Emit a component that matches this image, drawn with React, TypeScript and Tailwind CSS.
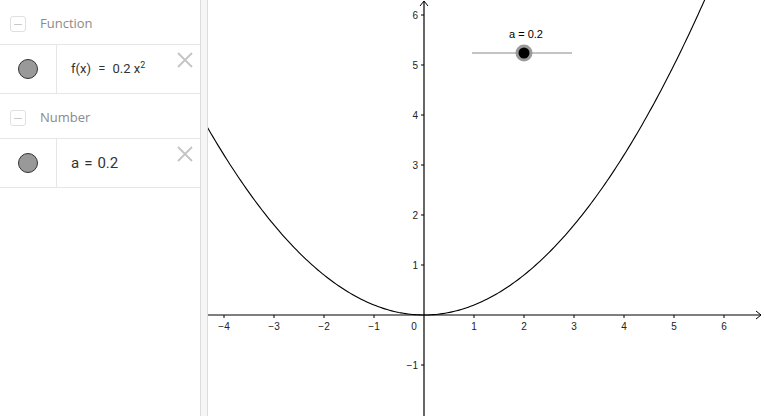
import React from "react";

const ORIGIN_X = 216;
const ORIGIN_Y = 315;
const UNIT = 50;

const parabola = (() => {
  const pts: string[] = [];
  for (let i = 0; i <= 220; i++) {
    const x = -4.4 + (i * 10.2) / 220;
    const y = 0.2 * x * x;
    pts.push(`${(ORIGIN_X + x * UNIT).toFixed(2)},${(ORIGIN_Y - y * UNIT).toFixed(2)}`);
  }
  return "M" + pts.join(" L");
})();

const CollapseIcon = () => (
  <div className="w-[16px] h-[16px] rounded-[3px] border border-[#e0e0e0] flex items-center justify-center">
    <div className="w-[8px] h-[1px] bg-[#c8c8c8]" />
  </div>
);

const CloseIcon = () => (
  <svg width="18" height="18" viewBox="0 0 18 18" className="absolute right-[6px] top-[6px]">
    <path d="M2 2 L16 16 M16 2 L2 16" stroke="#c4c4c4" strokeWidth="1.8" />
  </svg>
);

const Header = ({ label }: { label: string }) => (
  <div className="h-[45px] flex items-center pl-[10px] pt-[4px] gap-[14px] border-b border-[#e6e6e6]">
    <CollapseIcon />
    <span className="text-[13px] text-[#8a8a8a]" style={{ fontFamily: "'Open Sans', sans-serif" }}>
      {label}
    </span>
  </div>
);

const Item = ({ children }: { children: React.ReactNode }) => (
  <div className="relative h-[49px] flex border-b border-[#e6e6e6]">
    <div className="w-[57px] flex items-center justify-center border-r border-[#e6e6e6]">
      <div className="w-[20px] h-[20px] rounded-full bg-[#999999] border border-[#333333]" />
    </div>
    <div className="flex items-center pl-[14px] text-[#333333]" style={{ fontFamily: "'Roboto', 'Liberation Sans', sans-serif" }}>
      {children}
    </div>
    <CloseIcon />
  </div>
);

const Graph = () => {
  const xs = [-4, -3, -2, -1, 1, 2, 3, 4, 5, 6];
  const ys = [-1, 1, 2, 3, 4, 5, 6];
  const fmt = (n: number) => (n < 0 ? "\u2212" + Math.abs(n) : String(n));
  return (
    <svg width="556" height="416" className="block" style={{ fontFamily: "'Liberation Sans', Arial, sans-serif" }}>
      {/* axes */}
      <line x1="0" y1={ORIGIN_Y} x2="553" y2={ORIGIN_Y} stroke="#000" strokeWidth="1.2" />
      <path d="M548 311 L553 315 L548 319" fill="none" stroke="#000" strokeWidth="1" />
      <line x1={ORIGIN_X} y1="1" x2={ORIGIN_X} y2="416" stroke="#000" strokeWidth="1.2" />
      <path d="M212 6 L216 1 L220 6" fill="none" stroke="#000" strokeWidth="1" />
      {xs.map((v) => (
        <g key={"x" + v}>
          <line x1={ORIGIN_X + v * UNIT} y1={ORIGIN_Y} x2={ORIGIN_X + v * UNIT} y2={ORIGIN_Y + 3} stroke="#000" />
          <text x={ORIGIN_X + v * UNIT} y={ORIGIN_Y + 15} fontSize="10" fill="#222" textAnchor="middle">
            {fmt(v)}
          </text>
        </g>
      ))}
      <text x={ORIGIN_X - 10} y={ORIGIN_Y + 15} fontSize="10" fill="#222" textAnchor="middle">0</text>
      {ys.map((v) => (
        <g key={"y" + v}>
          <line x1={ORIGIN_X - 3} y1={ORIGIN_Y - v * UNIT} x2={ORIGIN_X} y2={ORIGIN_Y - v * UNIT} stroke="#000" />
          <text x={ORIGIN_X - 6} y={ORIGIN_Y - v * UNIT + 4} fontSize="10" fill="#222" textAnchor="end">
            {fmt(v)}
          </text>
        </g>
      ))}
      {/* function */}
      <path d={parabola} fill="none" stroke="#000" strokeWidth="1.1" />
      {/* slider */}
      <line x1="264" y1="53" x2="364" y2="53" stroke="#888" strokeWidth="1" />
      <circle cx="316" cy="53" r="8.5" fill="#9a9a9a" />
      <circle cx="316" cy="53" r="5.5" fill="#000" />
      <text x="318" y="38" fontSize="11" fill="#000" textAnchor="middle">a = 0.2</text>
    </svg>
  );
};

export default function App() {
  return (
    <div className="w-[764px] h-[416px] flex bg-white overflow-hidden">
      <div className="w-[200px] shrink-0 flex flex-col">
        <Header label="Function" />
        <Item>
          <span className="text-[13px]">
            f(x) <span className="mx-[4px]">=</span> 0.2 x<sup className="text-[9px] -top-[5px]">2</sup>
          </span>
        </Item>
        <Header label="Number" />
        <Item>
          <span className="text-[15px]">
            a<span className="mx-[5px]">=</span>0.2
          </span>
        </Item>
      </div>
      <div className="w-[8px] shrink-0 bg-[#f6f6f6] border-l border-r border-[#dcdcdc]" />
      <div className="flex-1">
        <Graph />
      </div>
    </div>
  );
}
